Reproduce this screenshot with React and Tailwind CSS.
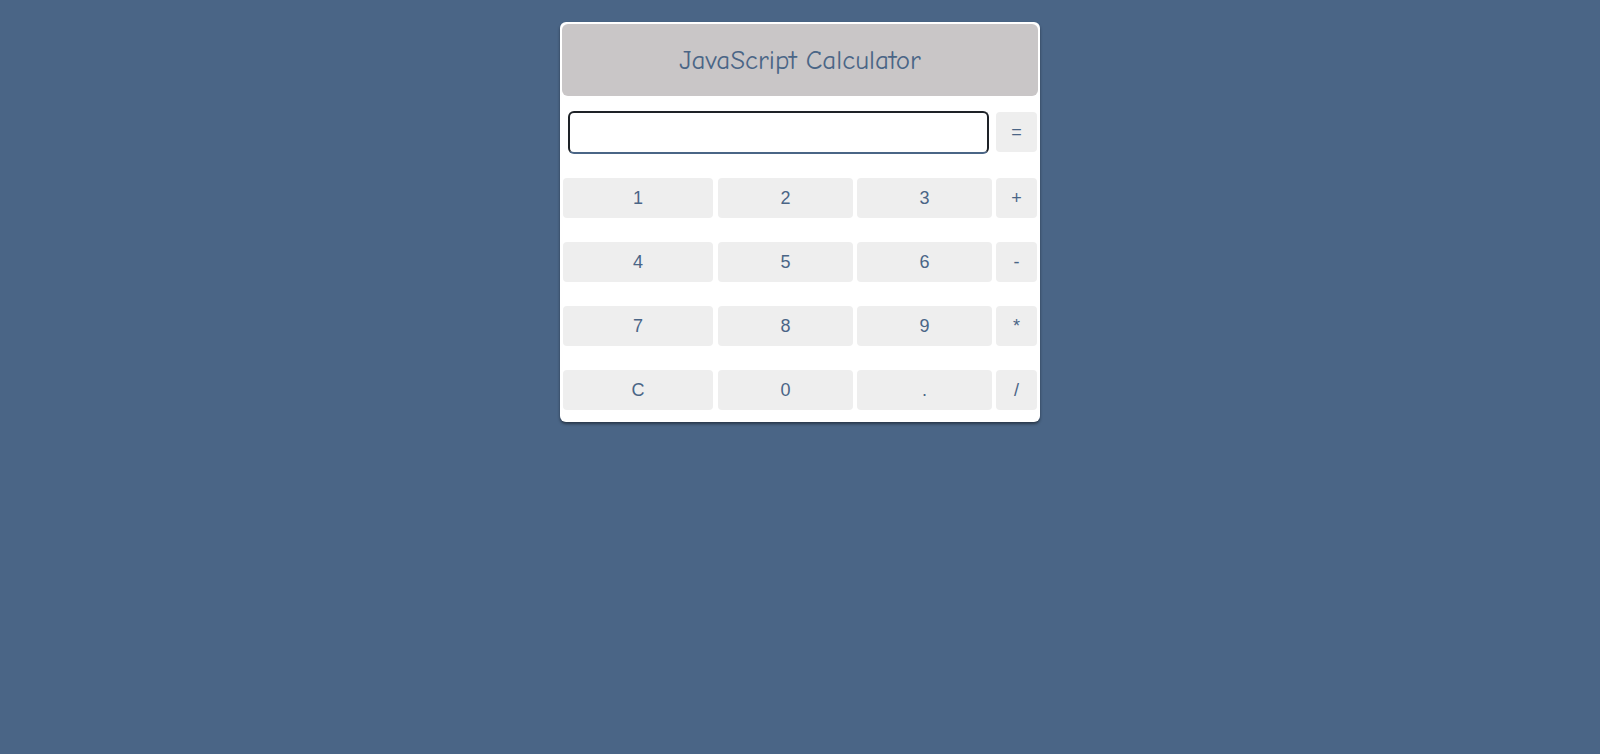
import React from "react";

const rows = [
  ["1", "2", "3", "+"],
  ["4", "5", "6", "-"],
  ["7", "8", "9", "*"],
  ["C", "0", ".", "/"],
];

export default function App() {
  return (
    <div className="min-h-[754px] w-full bg-[#4a6586] pt-[22px]">
      <div className="mx-auto w-[480px] rounded-[6px] bg-white p-[2px] pb-[12px] shadow-[0_2px_3px_rgba(0,0,0,0.45)]">
        <div className="flex h-[72px] items-center justify-center rounded-[6px] bg-[#c9c6c7] pt-[2px]">
          <h1
            className="text-[27px] text-[#4a6586]"
            style={{ fontFamily: '"Comic Sans MS", "Comic Neue", cursive' }}
          >
            JavaScript Calculator
          </h1>
        </div>
        <div
          className="mt-[14px] grid grid-cols-[150px_136px_135px_41px] gap-x-[4px] gap-y-[24px] pl-[1px] text-[18px] text-[#4a6586]"
          style={{ fontFamily: '"Liberation Sans", Arial, sans-serif' }}
        >
          <div className="col-span-3 flex h-[44px] items-center pl-[5px] pr-[3px]">
            <input
              type="text"
              className="h-[43px] w-full rounded-[6px] border-2 border-[#1e2227] border-b-[#4a6586] bg-white outline-none"
            />
          </div>
          <div className="flex items-center">
            <button className="h-[40px] w-full rounded-[4px] bg-[#eeeeee] text-[#4a6586]">=</button>
          </div>
          {rows.flat().map((k, i) => (
            <button
              key={k}
              className={
                i % 4 === 1
                  ? "ml-[1px] h-[40px] w-[135px] rounded-[4px] bg-[#eeeeee] text-[#4a6586]"
                  : "h-[40px] w-full rounded-[4px] bg-[#eeeeee] text-[#4a6586]"
              }
            >
              {k}
            </button>
          ))}
        </div>
      </div>
    </div>
  );
}
